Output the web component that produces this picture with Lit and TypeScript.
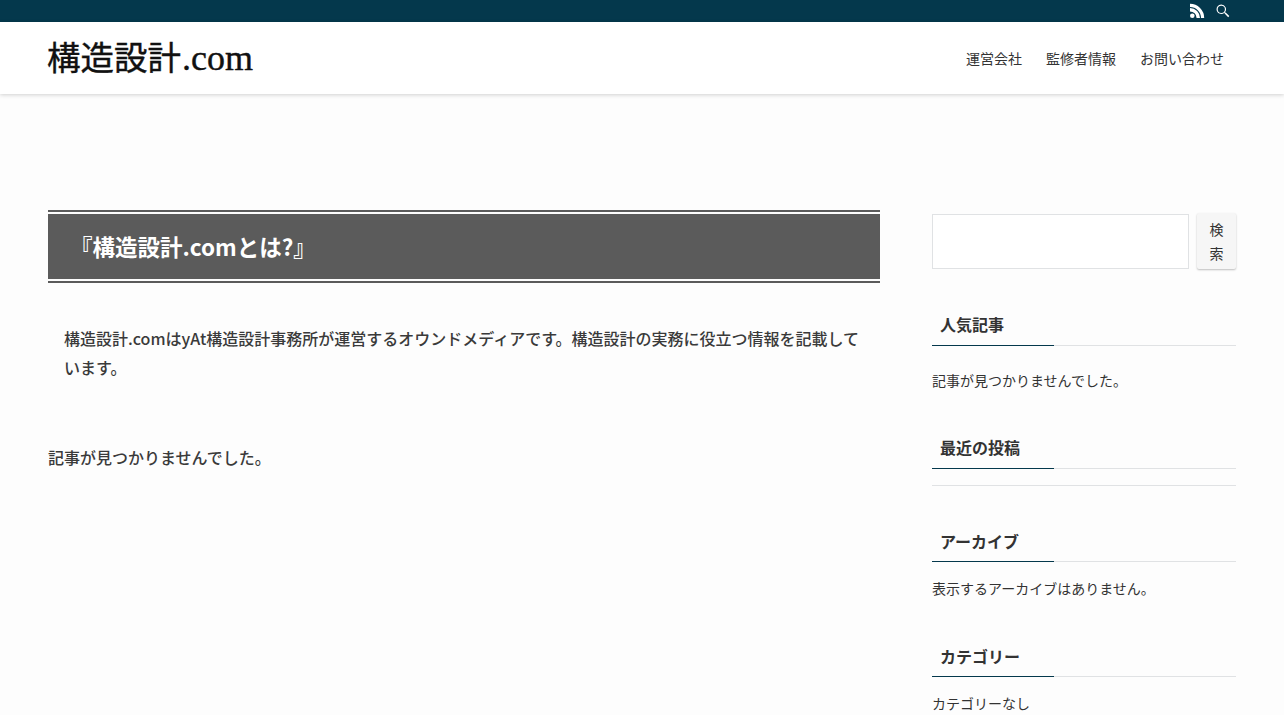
import { LitElement, html, css } from "lit";
import { customElement } from "lit/decorators.js";

@customElement("app-root")
export class AppRoot extends LitElement {
  static override styles = css`
    :host {
      display: block;
      min-height: 715px;
      height: 715px;
      overflow: hidden;
      background: #fdfdfd;
      color: #333;
      font-family: "Noto Sans CJK JP", "Noto Sans", sans-serif;
      font-size: 16px;
    }
    .topbar {
      height: 22px;
      background: #04384c;
      display: flex;
      justify-content: flex-end;
      align-items: center;
      gap: 10px;
      padding-right: 53px;
    }
    .topbar svg {
      display: block;
      fill: #fff;
    }
    .header {
      position: relative;
      height: 72px;
      background: #fff;
      box-shadow: 0 1px 4px rgba(0, 0, 0, 0.18);
      display: flex;
      justify-content: space-between;
      align-items: center;
      padding: 0 48px;
    }
    .logo {
      font-family: "Liberation Serif", "Noto Sans CJK JP", serif;
      font-size: 33.5px;
      line-height: 38px;
      color: #111;
      white-space: nowrap;
      margin-left: -1px;
      -webkit-text-stroke: 0.4px #111;
    }
    .logo span {
      font-size: 36px;
      margin-left: 1px;
    }
    .nav {
      display: flex;
      gap: 24px;
      padding-right: 12px;
      font-size: 14px;
      color: #333;
    }
    .page {
      display: flex;
      gap: 52px;
      padding: 116px 48px 0;
    }
    .main {
      width: 832px;
      flex: none;
    }
    .title {
      margin: 0;
      border-top: 2px solid #5b5b5b;
      border-bottom: 2px solid #5b5b5b;
      padding: 2px 0;
    }
    .title div {
      height: 65px;
      line-height: 65px;
      background: #5b5b5b;
      color: #fff;
      font-size: 22.5px;
      font-weight: 700;
      padding-left: 22px;
    }
    .lead {
      margin: 41px 0 0;
      padding: 0 16px;
      color: #3a3a3a;
      font-weight: 500;
      line-height: 29px;
    }
    .none {
      margin: 61px 0 0;
      color: #3a3a3a;
      font-weight: 500;
      line-height: 29px;
    }
    .side {
      width: 304px;
      flex: none;
      font-size: 14px;
      padding-top: 3px;
    }
    .search {
      display: flex;
      gap: 8px;
      height: 56px;
    }
    .search .field {
      width: 257px;
      height: 55px;
      margin-top: 1px;
      box-sizing: border-box;
      border: 1px solid #e0e2e4;
      background: #fff;
    }
    .search .btn {
      width: 39px;
      height: 56px;
      box-sizing: border-box;
      background: #f6f6f6;
      border-radius: 2px;
      box-shadow: 0 1px 2px rgba(0, 0, 0, 0.25);
      font-size: 14px;
      line-height: 24px;
      color: #333;
      text-align: center;
      padding: 4px 10px;
    }
    .wtitle {
      position: relative;
      margin: 0;
      height: 34px;
      line-height: 24px;
      box-sizing: border-box;
      padding-left: 8px;
      border-bottom: 1px solid #e0e2e4;
      font-size: 16px;
      font-weight: 700;
      color: #333;
    }
    .wtitle::after {
      content: "";
      position: absolute;
      left: 0;
      bottom: -1px;
      width: 122px;
      height: 1px;
      background: #04384c;
    }
    .w1 { margin-top: 43px; }
    .w2 { margin-top: 43px; }
    .w3 { margin-top: 42px; padding-top: 1px; }
    .w4 { margin-top: 43px; padding-top: 1px; }
    .wtext {
      margin: 0;
      padding-top: 22px;
      line-height: 24px;
    }
    .wtext.tight {
      padding-top: 14px;
    }
    .wrule {
      height: 16px;
      border-bottom: 1px solid #e0e2e4;
    }
  `;

  override render() {
    return html`
      <div class="topbar">
        <svg width="16" height="16" viewBox="0 0 16 16" aria-label="RSS">
          <circle cx="3.3" cy="12.8" r="2.3"></circle>
          <path d="M1 5v3.4a6.6 6.6 0 0 1 6.6 6.6H11A10 10 0 0 0 1 5z"></path>
          <path d="M1 .8V4a11 11 0 0 1 11 11h3.2A14.2 14.2 0 0 0 1 .8z"></path>
        </svg>
        <svg width="16" height="16" viewBox="0 0 16 16" aria-label="Search">
          <path
            d="M6.3 1.6a4.7 4.7 0 0 1 3.6 7.7l.2.2h.6l3.6 3.6-1.1 1.1-3.6-3.6v-.6l-.2-.2a4.7 4.7 0 1 1-3.1-8.2zm0 1.1a3.6 3.6 0 1 0 0 7.2 3.6 3.6 0 0 0 0-7.2z"
          ></path>
        </svg>
      </div>
      <header class="header">
        <div class="logo">構造設計<span>.com</span></div>
        <nav class="nav">
          <span>運営会社</span>
          <span>監修者情報</span>
          <span>お問い合わせ</span>
        </nav>
      </header>
      <div class="page">
        <main class="main">
          <h1 class="title"><div>『構造設計.comとは?』</div></h1>
          <p class="lead">
            構造設計.comはyAt構造設計事務所が運営するオウンドメディアです。構造設計の実務に役立つ情報を記載しています。
          </p>
          <p class="none">記事が見つかりませんでした。</p>
        </main>
        <aside class="side">
          <div class="search">
            <div class="field"></div>
            <div class="btn">検索</div>
          </div>
          <h2 class="wtitle w1">人気記事</h2>
          <p class="wtext">記事が見つかりませんでした。</p>
          <h2 class="wtitle w2">最近の投稿</h2>
          <div class="wrule"></div>
          <h2 class="wtitle w3">アーカイブ</h2>
          <p class="wtext tight">表示するアーカイブはありません。</p>
          <h2 class="wtitle w4">カテゴリー</h2>
          <p class="wtext tight">カテゴリーなし</p>
        </aside>
      </div>
    `;
  }
}
